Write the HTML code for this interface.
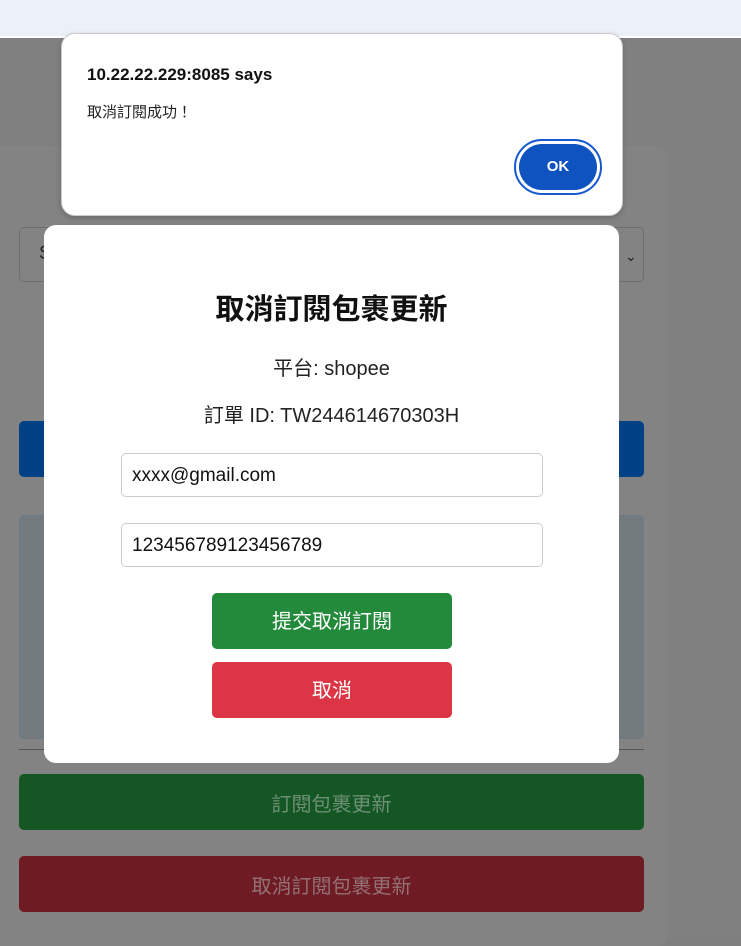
<!DOCTYPE html>
<html><head><meta charset="utf-8"><style>
*{box-sizing:border-box;margin:0;padding:0}
body{width:741px;height:938px;position:relative;overflow:hidden;background:#7f7f7f;font-family:"Liberation Sans","Noto Sans CJK TC",sans-serif}
.a{position:absolute}
</style></head><body>
<div class="a" style="left:0;top:0;width:741px;height:36px;background:#ebf0f9"></div>
<div class="a" style="left:0;top:36px;width:741px;height:2px;background:#fff"></div>
<div class="a" style="left:0;top:38px;width:741px;height:900px;background:#808080"></div>
<div class="a" style="left:-10px;top:146px;width:678px;height:800px;background:#838383;border-radius:10px"></div>
<div class="a" style="left:19px;top:227px;width:625px;height:55px;border:1px solid #6e6e6e;border-radius:5px;background:#838383"></div>
<div class="a" style="left:39px;top:243px;color:#222;font-size:19px">S</div>
<div class="a" style="left:625px;top:248px;color:#222;font-size:14px">⌄</div>
<div class="a" style="left:19px;top:421px;width:625px;height:56px;background:#004085;border-radius:5px"></div>
<div class="a" style="left:19px;top:515px;width:625px;height:224px;background:#737b7f;border:1px solid #6b7b88;border-radius:5px"></div>
<div class="a" style="left:19px;top:749px;width:625px;height:1px;background:#555"></div>
<div class="a" style="left:19px;top:774px;width:625px;height:56px;background:#155724;border-radius:5px;color:#6d8f74;font-size:20px;text-align:center;line-height:62px">訂閱包裹更新</div>
<div class="a" style="left:19px;top:856px;width:625px;height:56px;background:#6e1b24;border-radius:5px;color:#937073;font-size:20px;text-align:center;line-height:62px">取消訂閱包裹更新</div>

<div class="a" style="left:44px;top:225px;width:575px;height:538px;background:#fff;border-radius:12px;text-align:center">
<div style="margin-top:65px;font-size:29px;line-height:40px;font-weight:bold;color:#111">取消訂閱包裹更新</div>
<div style="margin-top:26px;font-size:20px;line-height:26px;color:#222">平台: shopee</div>
<div style="margin-top:21px;font-size:20px;line-height:26px;color:#222">訂單 ID: TW244614670303H</div>
</div>
<div class="a" style="left:121px;top:453px;width:422px;height:44px;border:1px solid #ccc;border-radius:5px;background:#fff;font-size:19px;line-height:44px;padding-left:10px;color:#111">xxxx@gmail.com</div>
<div class="a" style="left:121px;top:523px;width:422px;height:44px;border:1px solid #ccc;border-radius:5px;background:#fff;font-size:19px;line-height:44px;padding-left:10px;color:#111">123456789123456789</div>
<div class="a" style="left:212px;top:593px;width:240px;height:56px;background:#228a3a;border-radius:5px;color:#fff;font-size:20px;line-height:58px;text-align:center">提交取消訂閱</div>
<div class="a" style="left:212px;top:662px;width:240px;height:56px;background:#dc3545;border-radius:5px;color:#fff;font-size:20px;line-height:58px;text-align:center">取消</div>

<div class="a" style="left:61px;top:33px;width:562px;height:183px;background:#fff;border:1px solid #ccc;border-radius:14px;box-shadow:0 2px 6px rgba(0,0,0,.2)">
<div class="a" style="left:25px;top:31px;font-size:17px;font-weight:bold;color:#111">10.22.22.229:8085 says</div>
<div class="a" style="left:25px;top:67px;font-size:15px;color:#222">取消訂閱成功！</div>
<div class="a" style="left:452px;top:105px;width:88px;height:56px;border:2px solid #1558d0;border-radius:28px;padding:3px">
<div style="width:100%;height:100%;background:#0f53c0;border-radius:24px;color:#fff;font-weight:bold;font-size:15px;text-align:center;line-height:46px">OK</div></div>
</div>
</body></html>
